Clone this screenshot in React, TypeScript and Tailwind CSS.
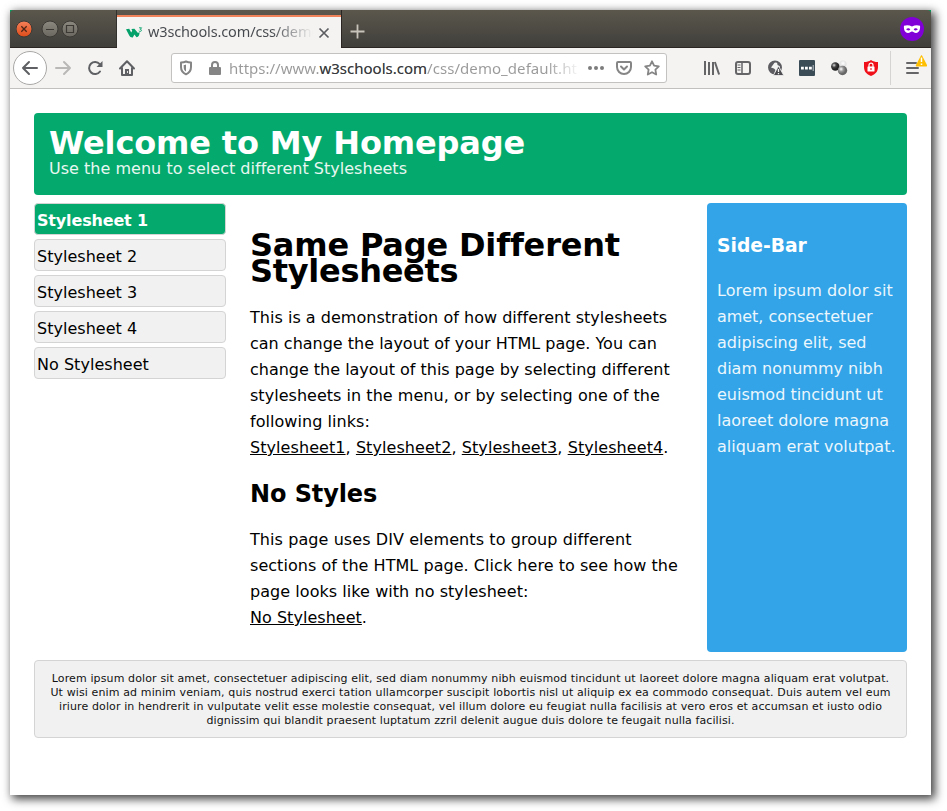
import type { ReactNode } from "react";

type Row = { text: ReactNode; track?: string };

function Lines({ rows }: { rows: Row[] }) {
  return (
    <>
      {rows.map((row, i) => (
        <span key={i} className={`block whitespace-nowrap ${row.track ?? ""}`}>
          {row.text}
        </span>
      ))}
    </>
  );
}

function TitleBar() {
  return (
    <div className="flex h-[38px] shrink-0 border-b border-[#2b2523] bg-linear-to-b from-[#5b574d] to-[#403f3a]">
      <div className="flex w-[107px] items-center border-r border-[#33312d] pl-[6px]">
        <svg width="64" height="20" viewBox="0 0 64 20" fill="none">
          <defs>
            <linearGradient id="close" x1="0" y1="0" x2="0" y2="1">
              <stop stopColor="#f58059" />
              <stop offset="1" stopColor="#df4c19" />
            </linearGradient>
            <linearGradient id="grey" x1="0" y1="0" x2="0" y2="1">
              <stop stopColor="#8b897f" />
              <stop offset="1" stopColor="#69675f" />
            </linearGradient>
          </defs>
          <circle cx="8" cy="10" r="8" fill="url(#close)" stroke="#3c3935" />
          <path d="M5.3 7.3l5.4 5.4M10.7 7.3l-5.4 5.4" stroke="#4e2617" strokeWidth="1.3" />
          <circle cx="34" cy="10" r="8" fill="url(#grey)" stroke="#3c3935" />
          <path d="M30 10.5h8" stroke="#3c3935" strokeWidth="1.2" />
          <circle cx="54" cy="10" r="8" fill="url(#grey)" stroke="#3c3935" />
          <path d="M50.5 6.5h7v7h-7z" stroke="#3c3935" strokeWidth="1.2" />
        </svg>
      </div>
      <div className="mt-[5px] flex h-[33px] w-[224px] items-center border-t-2 border-[#f0825a] bg-[#f4f3f2] pl-[9px]">
        <svg width="17" height="12" viewBox="0 0 17 12" className="shrink-0">
          <path d="M0 2.200l3.200-.4 2 3.600 1-1.600L5.400 2l3-.3 3.600 4.200L13.500 5c.2 3-1 5-3 5.200L8.400 7.500l-1.600 3C5 10.700 4 9.800 3.100 8.300z" fill="#04a16b" />
          <path d="M13 .8h2.600l-1.400 1.500c1.700 0 1.700 2.100 0 2.100-.7 0-1.100-.2-1.400-.6" fill="none" stroke="#04a16b" strokeWidth=".9" />
        </svg>
        <span className="mb-[3px] ml-[5px] w-[165px] whitespace-nowrap bg-linear-to-r from-[#45484c] from-75% to-transparent to-100% bg-clip-text font-['Noto_Sans',sans-serif] text-[14.5px] leading-5 tracking-[-0.14px] text-transparent">
          w3schools.com/css/demo
        </span>
        <svg width="12" height="12" viewBox="0 0 12 12" className="ml-[5px] shrink-0">
          <path d="M1.500 1.500l9 9M10.500 1.500l-9 9" stroke="#5b5d61" strokeWidth="1.700" />
        </svg>
      </div>
      <div className="flex flex-1 items-center justify-between border-l border-[#2b2523] pl-[8px] pr-[7px]">
        <svg width="15" height="15" viewBox="0 0 15 15" className="mt-[5px]">
          <path d="M7.500 .5v14M.5 7.500h14" stroke="#c9c4bb" strokeWidth="1.800" />
        </svg>
        <svg width="24" height="24" viewBox="0 0 24 24">
          <circle cx="12" cy="12" r="12" fill="#8000d7" />
          <path fillRule="evenodd" d="M4 8.800c2.800-1.100 5.400-.6 8 .6 2.600-1.200 5.200-1.700 8-.6.5 3.500-.9 7.100-3.900 7.300-2 .1-2.700-1.600-4.100-1.600s-2.100 1.700-4.100 1.600C4.900 15.900 3.500 12.300 4 8.800zm2.200 3.500c.8 1.400 3.100 1.500 4.100.2-.8-1.600-3.100-1.700-4.100-.2zm7.500.2c1 1.300 3.300 1.200 4.100-.2-1-1.500-3.300-1.400-4.100.2z" fill="#fff" />
        </svg>
      </div>
    </div>
  );
}

function NavBar() {
  return (
    <div className="flex h-[41px] shrink-0 items-center border-b border-[#c1c0bf] bg-[#f4f3f2]">
      <div className="ml-[3px] flex size-[34px] items-center justify-center rounded-full border border-[#a9a8a7] bg-white">
        <svg width="18" height="18" viewBox="0 0 18 18" fill="none" stroke="#5f6063" strokeWidth="2" strokeLinecap="round" strokeLinejoin="round">
          <path d="M16 9H2M8 3L2 9l6 6" />
        </svg>
      </div>
      <svg className="ml-[7px]" width="18" height="18" viewBox="0 0 18 18" fill="none" stroke="#b9b8b7" strokeWidth="2" strokeLinecap="round" strokeLinejoin="round">
        <path d="M2 9h14M10 3l6 6-6 6" />
      </svg>
      <svg className="ml-[15px]" width="16" height="16" viewBox="0 0 16 16" fill="none" stroke="#5f6063" strokeWidth="2">
        <path d="M13 11.500A6 6 0 1 1 12.700 4.200" strokeLinecap="round" />
        <path d="M15.500 1v6h-6z" fill="#5f6063" stroke="none" />
      </svg>
      <svg className="ml-[15px]" width="18" height="18" viewBox="0 0 18 18" fill="none" stroke="#5f6063" strokeWidth="2" strokeLinejoin="round" strokeLinecap="round">
        <path d="M2 9.500L9 2.300l7 7.200M4 9v7h10V9" />
        <path d="M7 16v-6h4v6z" fill="#5f6063" stroke="none" />
        <path d="M9.500 12.500v1" stroke="#f4f3f2" strokeWidth="1" />
      </svg>
      <div className="ml-[35px] flex h-[30px] w-[496px] items-center rounded-[3px] border border-[#c3c2c1] bg-white pl-[7px]">
        <svg width="14" height="16" viewBox="0 0 14 16" className="shrink-0">
          <path d="M7 1.500c1.700.8 3.300 1 5 1V7c0 4-2 6-5 7.300C4 13 2 11 2 7V2.500c1.700 0 3.300-.2 5-1z" fill="none" stroke="#858585" strokeWidth="2" strokeLinejoin="round" />
          <path d="M7 4.500v7C5.300 10.500 4.700 9 4.700 7V5.100C5.500 5 6.200 4.900 7 4.500z" fill="#858585" />
        </svg>
        <svg width="12" height="14" viewBox="0 0 12 14" className="ml-[16px] shrink-0">
          <path d="M3 7V4a3 3 0 0 1 6 0v3" fill="none" stroke="#858585" strokeWidth="2" />
          <rect y="6" width="12" height="8" rx="1" fill="#858585" />
        </svg>
        <span className="ml-[8px] w-[352px] whitespace-nowrap bg-linear-to-r from-[#999] from-90% to-transparent to-100% bg-clip-text font-['Noto_Sans',sans-serif] text-[15px] leading-5 text-transparent">
          https://www.<span className="text-[#38383d]">w3schools.com</span><span className="tracking-[0.06px]">/css/demo_default.ht</span>
        </span>
        <svg width="16" height="4" viewBox="0 0 16 4" className="ml-[7px] shrink-0" fill="#7c7c7c">
          <circle cx="2" cy="2" r="2" /><circle cx="8" cy="2" r="2" /><circle cx="14" cy="2" r="2" />
        </svg>
        <svg width="16" height="14" viewBox="0 0 16 14" className="ml-[12px] shrink-0" fill="none" stroke="#858585" strokeWidth="2" strokeLinecap="round" strokeLinejoin="round">
          <path d="M2 1h12a1 1 0 0 1 1 1v4a7 7 0 0 1-14 0V2a1 1 0 0 1 1-1zM5 5.500l3 3 3-3" />
        </svg>
        <svg width="16" height="16" viewBox="0 0 16 16" className="ml-[12px] shrink-0" fill="none" stroke="#858585" strokeWidth="1.800" strokeLinejoin="round">
          <path d="M8 1.300l2.100 4.300 4.700.7-3.400 3.300.8 4.900L8 12.200l-4.200 2.300.8-4.900L1.200 6.300l4.700-.7z" />
        </svg>
      </div>
      <svg className="ml-[37px]" width="16" height="14" viewBox="0 0 16 14" stroke="#656568" strokeWidth="2">
        <path d="M1 0v14M5 1v13M9 1v13M10.900 1l4.200 12.500" />
      </svg>
      <svg className="ml-[15px]" width="16" height="14" viewBox="0 0 16 14" fill="none" stroke="#656568">
        <rect x="1" y="1" width="14" height="12" rx="2" strokeWidth="2" />
        <path d="M7 1v12" strokeWidth="1.500" />
        <path d="M2.500 4h3M2.500 6.500h3M2.500 9h3" strokeWidth="1" />
      </svg>
      <svg className="ml-[17px]" width="16" height="16" viewBox="0 0 16 16">
        <circle cx="7" cy="7.500" r="6" fill="none" stroke="#5d5d61" strokeWidth="1.900" />
        <path d="M1 8V4l4-2.500L7 2 4.500 5.500 3 7.500l3 1L7.500 10 6 13.500 3 12zM9 1.500l3.500 2.500 1 4-2-2-2-1z" fill="#5d5d61" />
        <path d="M10.500 6l5.300 9.500H5.300z" fill="#4c4c50" stroke="#f4f3f2" strokeWidth=".8" />
        <path d="M10.500 9v3M10.500 13v1.300" stroke="#f4f3f2" strokeWidth="1.300" />
      </svg>
      <svg className="ml-[15px]" width="16" height="16" viewBox="0 0 16 16">
        <rect width="16" height="16" rx="1" fill="#3c4c57" />
        <path d="M2 6.700h2.800v2.800H2zM6 6.700h2.800v2.800H6zM10 6.700h2.800v2.800H10z" fill="#fff" />
        <path d="M14.200 5v6" stroke="#bfc5c9" />
      </svg>
      <svg className="ml-[16px]" width="17" height="16" viewBox="0 0 17 16">
        <defs>
          <radialGradient id="dark" cx=".35" cy=".35"><stop stopColor="#ddd" /><stop offset=".5" stopColor="#444" /><stop offset="1" stopColor="#222" /></radialGradient>
          <radialGradient id="mid" cx=".35" cy=".35"><stop stopColor="#fff" /><stop offset=".5" stopColor="#999" /><stop offset="1" stopColor="#666" /></radialGradient>
          <radialGradient id="light" cx=".5" cy=".4"><stop stopColor="#fff" /><stop offset="1" stopColor="#ddd" /></radialGradient>
        </defs>
        <circle cx="12" cy="4" r="3.500" fill="url(#light)" />
        <circle cx="4.300" cy="6.500" r="4.200" fill="url(#dark)" />
        <circle cx="11.500" cy="10.500" r="4.700" fill="url(#mid)" />
      </svg>
      <svg className="ml-[15px]" width="16" height="16" viewBox="0 0 16 16">
        <path d="M8 0c2 1.400 4.200 2 7 2v5c0 4.500-2.500 7.300-7 9-4.500-1.700-7-4.500-7-9V2c2.800 0 5-.6 7-2z" fill="#f0101a" />
        <path d="M6 7V5.200a2 2 0 0 1 4 0V7" fill="none" stroke="#fff" strokeWidth="1.200" />
        <rect x="4.500" y="6.500" width="7" height="5" rx=".5" fill="#fff" />
        <path d="M8 8v2" stroke="#e9000f" />
      </svg>
      <div className="ml-[11px] h-[34px] w-px bg-[#d5d4d3]" />
      <svg className="mb-[9px] ml-[14px]" width="22" height="20" viewBox="0 0 22 20">
        <path d="M2 9h9M2 14h11M2 19h11" stroke="#656568" strokeWidth="2" strokeLinecap="round" />
        <path d="M16.500 2l5 9.700H11.500z" fill="#ffbf00" stroke="#ffbf00" strokeWidth="1.500" strokeLinejoin="round" />
        <path d="M16.500 3.500v4.500M16.500 9.500v1.500" stroke="#fff" strokeWidth="1.500" />
      </svg>
    </div>
  );
}

const menu = ["Stylesheet 1", "Stylesheet 2", "Stylesheet 3", "Stylesheet 4", "No Stylesheet"];

function Link({ children }: { children: string }) {
  return <a className="underline">{children}</a>;
}

const heading: Row[] = [
  { text: "Same Page Different", track: "tracking-[-0.18px]" },
  { text: "Stylesheets", track: "tracking-[-0.29px]" },
];
const intro: Row[] = [
  { text: "This is a demonstration of how different stylesheets", track: "tracking-[0.025px]" },
  { text: "can change the layout of your HTML page. You can" },
  { text: "change the layout of this page by selecting different", track: "tracking-[-0.015px]" },
  { text: "stylesheets in the menu, or by selecting one of the", track: "tracking-[0.03px]" },
  { text: "following links:", track: "tracking-[0.05px]" },
  {
    text: <><Link>Stylesheet1</Link>, <Link>Stylesheet2</Link>, <Link>Stylesheet3</Link>, <Link>Stylesheet4</Link>.</>,
    track: "tracking-[0.07px]",
  },
];
const noStyles: Row[] = [
  { text: "This page uses DIV elements to group different", track: "tracking-[0.08px]" },
  { text: "sections of the HTML page. Click here to see how the", track: "tracking-[0.045px]" },
  { text: "page looks like with no stylesheet:", track: "tracking-[0.055px]" },
  { text: <><Link>No Stylesheet</Link>.</>, track: "tracking-[0.03px]" },
];
const side: Row[] = [
  { text: "Lorem ipsum dolor sit", track: "tracking-[0.1px]" },
  { text: "amet, consectetuer", track: "tracking-[-0.04px]" },
  { text: "adipiscing elit, sed" },
  { text: "diam nonummy nibh" },
  { text: "euismod tincidunt ut" },
  { text: "laoreet dolore magna" },
  { text: "aliquam erat volutpat." },
];
const footer: Row[] = [
  { text: "Lorem ipsum dolor sit amet, consectetuer adipiscing elit, sed diam nonummy nibh euismod tincidunt ut laoreet dolore magna aliquam erat volutpat.", track: "tracking-[0.123px]" },
  { text: "Ut wisi enim ad minim veniam, quis nostrud exerci tation ullamcorper suscipit lobortis nisl ut aliquip ex ea commodo consequat. Duis autem vel eum", track: "tracking-[0.123px]" },
  { text: "iriure dolor in hendrerit in vulputate velit esse molestie consequat, vel illum dolore eu feugiat nulla facilisis at vero eros et accumsan et iusto odio", track: "tracking-[0.118px]" },
  { text: "dignissim qui blandit praesent luptatum zzril delenit augue duis dolore te feugait nulla facilisi.", track: "tracking-[0.1px]" },
];

export default function App() {
  return (
    <div className="h-[811px] w-[947px] overflow-hidden bg-white p-[10px]">
      <div className="flex h-[785px] w-[921px] flex-col bg-white shadow-[3px_3px_9px_1px_rgba(0,0,0,0.75)]">
        <div className="bg-[#04a05f]">
          <div className="overflow-hidden rounded-t-[4px]">
            <TitleBar />
          </div>
        </div>
        <NavBar />
        <div className="flex flex-col gap-2 px-6 pt-6 font-[Verdana,'DejaVu_Sans',sans-serif] text-[16px] leading-[26px] text-black [font-variant-ligatures:none]">
          <header className="h-[82px] rounded-[4px] bg-[#04aa6d] px-[15px] pt-[17px] text-white">
            <h1 className="text-[32px] font-bold tracking-[-0.14px] whitespace-nowrap">Welcome to My Homepage</h1>
            <p className="tracking-[0.02px] whitespace-nowrap text-[#e8f7f1]">Use the menu to select different Stylesheets</p>
          </header>
          <div className="flex h-[449px]">
            <ul className="flex w-[192px] flex-col gap-1">
              {menu.map((item, i) => (
                <li
                  key={item}
                  className={`h-8 rounded-[4px] border border-[#d4d4d4] px-[2px] pt-[4px] ${i === 0 ? "bg-[#04aa6d] font-bold tracking-[-0.16px] text-white" : "bg-[#f1f1f1] tracking-[0.03px]"}`}
                >
                  {item}
                </li>
              ))}
            </ul>
            <main className="ml-6 w-[457px] pt-[29px]">
              <h1 className="text-[32px] font-bold"><Lines rows={heading} /></h1>
              <p className="mt-[21px]"><Lines rows={intro} /></p>
              <h2 className="mt-[20px] text-[24px] font-bold tracking-[-0.1px]">No Styles</h2>
              <p className="mt-[20px]"><Lines rows={noStyles} /></p>
            </main>
            <aside className="w-[200px] rounded-[4px] bg-[#32a4e7] px-[10px] pt-[30px] text-white">
              <h3 className="text-[18.72px] font-bold">Side-Bar</h3>
              <p className="mt-[19px] text-[#ebf6fd]"><Lines rows={side} /></p>
            </aside>
          </div>
          <footer className="flex h-[78px] flex-col items-center rounded-[4px] border border-[#d4d4d4] bg-[#f1f1f1] pt-[11px] text-[11px] leading-[14px] text-[#111]">
            <Lines rows={footer} />
          </footer>
        </div>
      </div>
    </div>
  );
}
